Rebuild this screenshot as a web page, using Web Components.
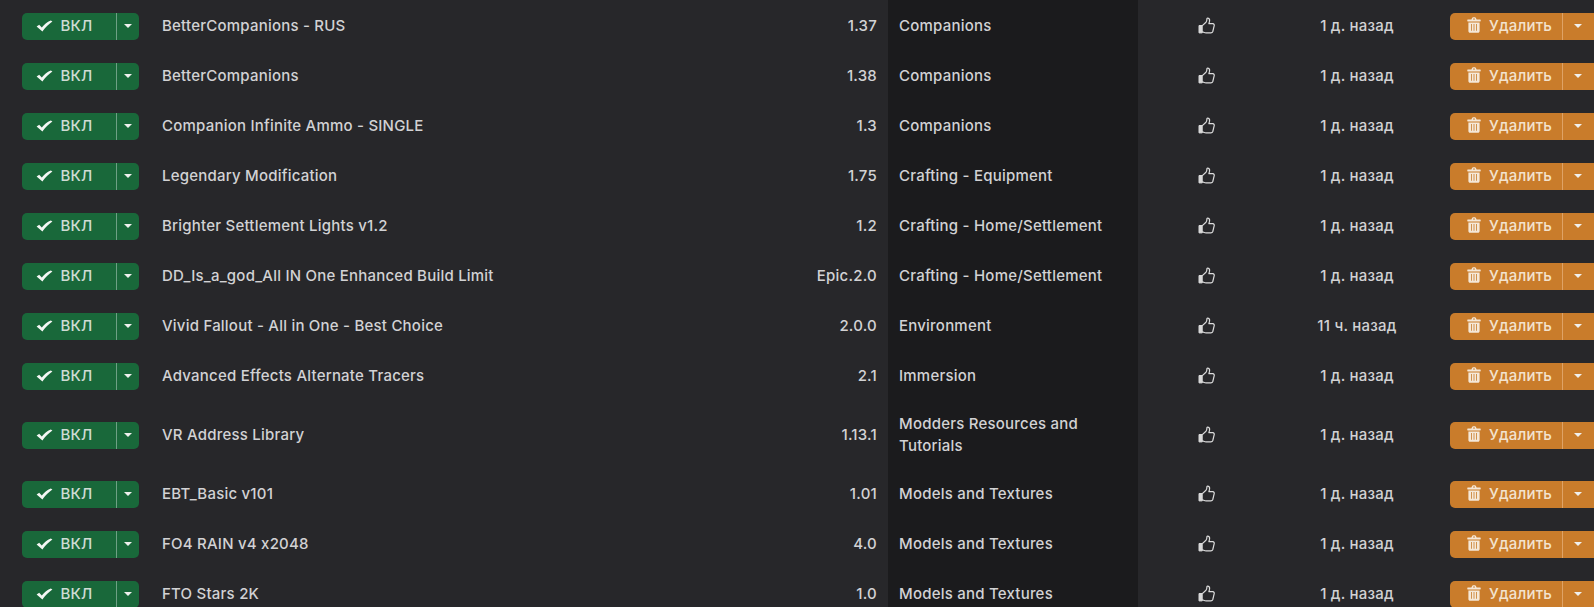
<!DOCTYPE html>
<html lang="ru"><head><meta charset="utf-8"><title>Mods</title>
<style>
html,body{margin:0;padding:0;background:#27272a;height:100%;overflow:hidden}
body{font:500 15px/22px Inter,"Liberation Sans",sans-serif;letter-spacing:.22px;font-feature-settings:"calt" 0;color:#d2d2d4}
</style></head><body>
<mod-list></mod-list>
<script>
const split=`
:host{display:inline-flex;flex:none;height:27px;border-radius:5px;overflow:hidden;color:var(--fg);background:var(--bg);font:500 15px/27px Inter,"Liberation Sans",sans-serif;white-space:nowrap}
.main{display:flex;align-items:center;justify-content:center;gap:7px;border-right:1px solid var(--line);box-sizing:border-box;width:var(--main);padding-bottom:2px}
.caret{display:flex;align-items:center;justify-content:center;width:var(--caret)}
.caret i{display:block;width:0;height:0;border:4px solid transparent;border-top-color:#f0f0ee;border-bottom:0}
svg{display:block;flex:none}
`;
class ToggleButton extends HTMLElement{constructor(){super();this.attachShadow({mode:'open'}).innerHTML=`<style>:host{--bg:#19683a;--fg:#cfdcd4;--line:#6ea085;--main:95px;--caret:22px}${split}.main{padding-right:9px}</style>
<div class="main"><svg width="17" height="13" viewBox="0 0 17 13"><path d="M.6 7.400l2.600-1.600 2.600 2.800C8 5.400 11 3 14.800 1.400l1.600 1.200C12.400 5.400 9.400 8.600 6.400 12.400z" fill="#f4f6f4"/></svg><span>ВКЛ</span></div><div class="caret"><i></i></div>`}}
class DeleteButton extends HTMLElement{constructor(){super();this.attachShadow({mode:'open'}).innerHTML=`<style>:host{--bg:#c97c2b;--fg:#f3e3cf;--line:#dfa366;--main:113px;--caret:40px}${split}.main{gap:8px;padding-left:7px}.caret{justify-content:flex-start;padding-left:11px;box-sizing:border-box}</style>
<div class="main"><svg width="14" height="16" viewBox="0 0 14 16"><path fill="#f5e8d8" fill-rule="evenodd" d="M4.400 2.400 5.200.8C5.400.4 5.800.2 6.200.2h1.600c.4 0 .8.2 1 .6l.8 1.600h3.600c.3 0 .5.2.5.5v1c0 .3-.2.5-.5.5H.8c-.3 0-.5-.2-.5-.5v-1c0-.3.2-.5.5-.5zM5.900 2.400h2.200l-.4-.8H6.300zM1.400 5.400h11.200v8.600c0 1-.7 1.800-1.600 1.800H3c-.9 0-1.600-.8-1.600-1.800zM4.200 7v6.800h.8V7zM6.600 7v6.800h.8V7zM9 7v6.800h.8V7z"/></svg><span>Удалить</span></div><div class="caret"><i></i></div>`}}
class ThumbIcon extends HTMLElement{constructor(){super();this.attachShadow({mode:'open'}).innerHTML=`<style>:host{display:inline-flex}svg{display:block}</style>
<svg width="18" height="18" viewBox="0 0 18 18"><path d="M1 8.500h3.200v7.400H1z" fill="#d8d8d8" stroke="#d8d8d8"/><path d="M4.600 8.400 8 5.200c.8-.9.9-2 .9-3.300 0-.6.5-1 1.100-.8 1.400.4 1.800 2 1.500 3.300l-.6 2.300h3.900c1.100 0 1.700 1 1.400 2l-1.400 5.800c-.3.9-1 1.400-1.900 1.400H8.100c-1.400 0-2.300-.6-3.500-1" fill="none" stroke="#dcdcdc" stroke-width="1.200" stroke-linejoin="round" stroke-linecap="round"/></svg>`}}
class ModRow extends HTMLElement{
 constructor(){super();this.attachShadow({mode:'open'}).innerHTML=`<style>
:host{display:grid;grid-template-columns:149px 619px 120px 250px 138px 162px 1fr;min-height:50px;align-items:stretch;color:#d2d2d4}
.c{display:flex;align-items:center;min-width:0}
.toggle{padding-left:22px}
.name{padding-left:13px}
.ver{justify-content:flex-end;padding-right:11px}
.cat{background:#1b1b1d;padding:12px 12px 12px 11px;box-sizing:border-box}
.like,.date{justify-content:center}
.act{padding-left:12px}
</style>
<div class="c toggle"><toggle-button></toggle-button></div>
<div class="c name"><slot name="name"></slot></div>
<div class="c ver"><slot name="ver"></slot></div>
<div class="c cat"><slot name="cat"></slot></div>
<div class="c like"><thumb-icon></thumb-icon></div>
<div class="c date"><slot name="date"></slot></div>
<div class="c act"><delete-button></delete-button></div>`}}
const rows=[["BetterCompanions - RUS","1.37","Companions","1 д. назад"],["BetterCompanions","1.38","Companions","1 д. назад"],["Companion Infinite Ammo - SINGLE","1.3","Companions","1 д. назад"],["Legendary Modification","1.75","Crafting - Equipment","1 д. назад"],["Brighter Settlement Lights v1.2","1.2","Crafting - Home/Settlement","1 д. назад"],["DD_Is_a_god_All IN One Enhanced Build Limit","Epic.2.0","Crafting - Home/Settlement","1 д. назад"],["Vivid Fallout - All in One - Best Choice","2.0.0","Environment","11 ч. назад"],["Advanced Effects Alternate Tracers","2.1","Immersion","1 д. назад"],["VR Address Library","1.13.1","Modders Resources and Tutorials","1 д. назад"],["EBT_Basic v101","1.01","Models and Textures","1 д. назад"],["FO4 RAIN v4 x2048","4.0","Models and Textures","1 д. назад"],["FTO Stars 2K","1.0","Models and Textures","1 д. назад"]];
class ModList extends HTMLElement{constructor(){super();this.attachShadow({mode:'open'}).innerHTML=`<style>:host{display:block}.edge{height:1px;width:250px;margin-left:888px;background:#1b1b1d}</style><div class="edge"></div>`+rows.map(r=>`<mod-row><span slot="name">${r[0]}</span><span slot="ver">${r[1]}</span><span slot="cat">${r[2]}</span><span slot="date">${r[3]}</span></mod-row>`).join('')}}
customElements.define('toggle-button',ToggleButton);
customElements.define('delete-button',DeleteButton);
customElements.define('thumb-icon',ThumbIcon);
customElements.define('mod-row',ModRow);
customElements.define('mod-list',ModList);
</script></body></html>
